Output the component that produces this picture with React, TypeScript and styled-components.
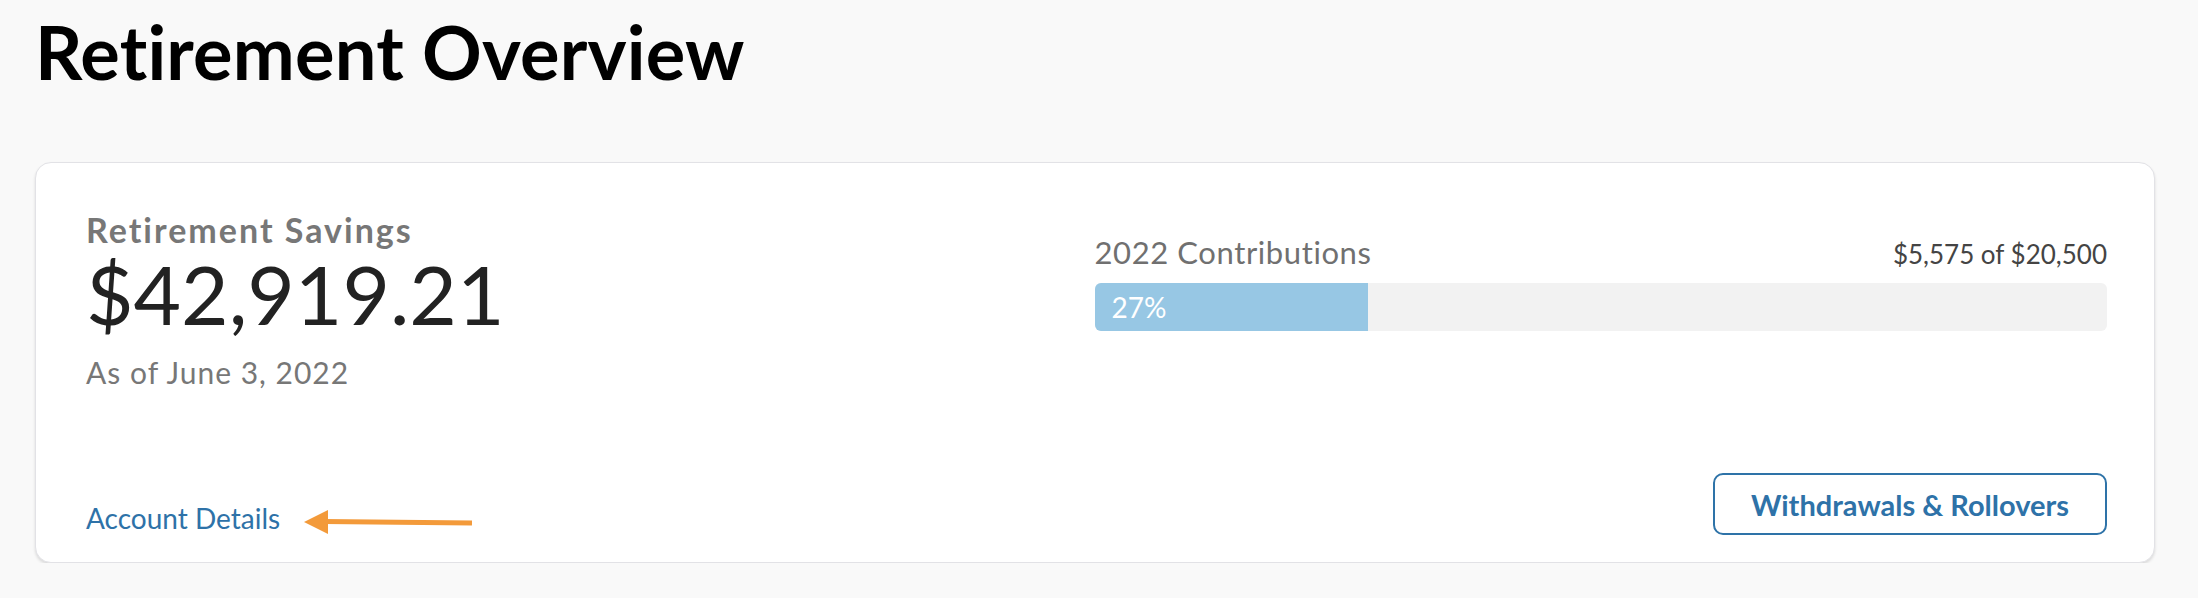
import styled, { createGlobalStyle } from "styled-components";

const GlobalStyle = createGlobalStyle`
    html, body {
        margin: 0;
        padding: 0;
        background: #f9f9f9;
        font-family: Lato, "Open Sans", sans-serif;
    }
`;

const Page = styled.div`
    padding: 7px 43px 0 35px;
`;

const Title = styled.h1`
    margin: 0 0 66px 0;
    font-size: 74px;
    line-height: 89px;
    font-weight: 700;
    color: #000;
    letter-spacing: 0.2px;
`;

const Card = styled.section`
    display: flex;
    flex-direction: column;
    background: #fff;
    border: 1px solid #e2e2e6;
    border-radius: 16px;
    box-shadow: 0 2px 3px rgba(0, 0, 0, 0.12);
    padding: 50px 47px 27px 50px;
`;

const TopRow = styled.div`
    display: grid;
    grid-template-columns: 1fr 1fr;
`;

const Savings = styled.div`
    display: flex;
    flex-direction: column;
`;

const Label = styled.div`
    font-size: 34px;
    line-height: 34px;
    font-weight: 700;
    color: #777;
    letter-spacing: 2px;
`;

const Amount = styled.div`
    margin-top: 1px;
    font-size: 82px;
    line-height: 90px;
    color: #222;
`;

const AsOf = styled.div`
    margin-top: 16px;
    font-size: 30px;
    line-height: 36px;
    color: #777;
    letter-spacing: 1px;
`;

const Contributions = styled.div`
    display: flex;
    flex-direction: column;
    padding-top: 21px;
    margin-left: -2px;
`;

const ContribHeader = styled.div`
    display: flex;
    justify-content: space-between;
    align-items: baseline;
`;

const ContribTitle = styled.span`
    font-size: 31px;
    line-height: 36px;
    color: #707070;
    letter-spacing: 0.6px;
`;

const ContribAmount = styled.span`
    font-size: 26px;
    line-height: 36px;
    color: #444;
`;

const Track = styled.div`
    margin-top: 11px;
    height: 48px;
    border-radius: 6px;
    background: #f2f2f2;
    overflow: hidden;
    display: flex;
`;

const Fill = styled.div`
    display: flex;
    align-items: center;
    padding-left: 17px;
    box-sizing: border-box;
    background: #97c7e4;
    color: #fff;
    font-size: 28px;
`;

const BottomRow = styled.div`
    margin-top: 83px;
    display: flex;
    justify-content: space-between;
    align-items: flex-end;
`;

const LinkGroup = styled.div`
    display: flex;
    align-items: center;
    gap: 24px;
    margin-bottom: -1px;
`;

const DetailsLink = styled.a`
    font-size: 28px;
    line-height: 36px;
    color: #2e72a8;
    text-decoration: none;
    cursor: pointer;
`;

const Arrow = styled.svg`
    margin-top: 8px;
    flex: none;
`;

const OutlineButton = styled.button`
    width: 394px;
    height: 62px;
    box-sizing: border-box;
    border: 2px solid #2e73a8;
    border-radius: 10px;
    background: #fff;
    color: #2e72a8;
    font-family: inherit;
    font-size: 29px;
    font-weight: 700;
    cursor: pointer;
`;

const contributed = 5575;
const limit = 20500;

function App() {
    const percent = Math.round((contributed / limit) * 100);

    return (
        <Page>
            <GlobalStyle />
            <Title>Retirement Overview</Title>
            <Card>
                <TopRow>
                    <Savings>
                        <Label>Retirement Savings</Label>
                        <Amount>$42,919.21</Amount>
                        <AsOf>As of June 3, 2022</AsOf>
                    </Savings>
                    <Contributions>
                        <ContribHeader>
                            <ContribTitle>2022 Contributions</ContribTitle>
                            <ContribAmount>$5,575 of $20,500</ContribAmount>
                        </ContribHeader>
                        <Track>
                            <Fill style={{ width: `${percent}%` }}>{percent}%</Fill>
                        </Track>
                    </Contributions>
                </TopRow>
                <BottomRow>
                    <LinkGroup>
                        <DetailsLink>Account Details</DetailsLink>
                        <Arrow width="170" height="26" viewBox="0 0 170 26">
                            <polygon points="0,13 24,1 24,25" fill="#f39a3a" />
                            <path d="M20 12.5 L168 14" stroke="#f39a3a" strokeWidth="5" strokeLinecap="butt" />
                        </Arrow>
                    </LinkGroup>
                    <OutlineButton>Withdrawals &amp; Rollovers</OutlineButton>
                </BottomRow>
            </Card>
        </Page>
    );
}

export default App;
